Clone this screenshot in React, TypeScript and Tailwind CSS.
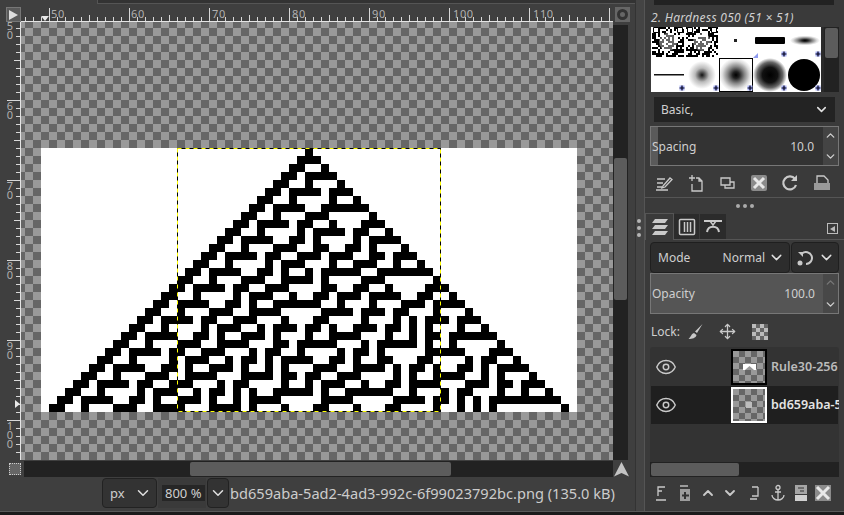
import React, { useMemo } from 'react';
import { ChevronDown, ChevronUp, Eye, Move } from 'lucide-react';

const CELL = 8;
const ROWS = 33;
const COLS = 67;

// rows of rule 30 as one path, merged per run of black cells
function rule30Path(ox: number, oy: number) {
  let row = new Array(COLS).fill(0);
  row[33] = 1;
  let d = '';
  for (let r = 0; r < ROWS; r++) {
    let c = 0;
    while (c < COLS) {
      if (row[c]) {
        const s = c;
        while (c < COLS && row[c]) c++;
        d += `M${ox + s * CELL} ${oy + r * CELL}h${(c - s) * CELL}v${CELL}h${-(c - s) * CELL}z`;
      } else c++;
    }
    row = row.map((v, i) => ((row[i - 1] || 0) ^ (v | (row[i + 1] || 0))));
  }
  return d;
}

function noisePath(seed: number, w: number, h: number, size: number) {
  let s = seed;
  let d = '';
  for (let y = 0; y < h; y += size) {
    for (let x = 0; x < w; x += size) {
      s = (s * 1103515245 + 12345) & 0x7fffffff;
      if ((s >> 16) % 100 < 52) d += `M${x} ${y}h${size}v${size}h${-size}z`;
    }
  }
  return d;
}

function TopRuler() {
  const ticks: number[] = [];
  for (let x = 4; x < 592; x += 8) ticks.push(x);
  const labels = [
    [30, '50'],
    [110, '60'],
    [191, '70'],
    [271, '80'],
    [351, '90'],
    [432, '100'],
    [512, '110'],
  ] as const;
  return (
    <svg width="592" height="15" className="block">
      {ticks.map((x, i) => {
        const major = i % 10 === 3;
        const mid = i % 10 === 8;
        return <rect key={x} x={x} y={major ? 1 : mid ? 8 : 10} width="1" height={major ? 14 : mid ? 7 : 5} fill="#d8d8d8" />;
      })}
      {labels.map(([x, t]) => (
        <text key={t} x={x} y="11" fontSize="11" fill="#b0b0b0" letterSpacing="0.6">{t}</text>
      ))}
      <rect x="0" y="14" width="592" height="1" fill="#e4e4e4" />
      <path d="M20 9h8l-4 5z" fill="#e8e8e8" />
    </svg>
  );
}

function LeftRuler() {
  const ticks: number[] = [];
  for (let y = 6; y < 438; y += 8) ticks.push(y);
  const labels: [number, string][] = [
    [-2, '50'],
    [78, '60'],
    [158, '70'],
    [238, '80'],
    [318, '90'],
    [398, '100'],
  ];
  return (
    <svg width="15" height="438" className="block shrink-0">
      {ticks.map((y, i) => {
        const major = i % 10 === 9;
        const mid = i % 10 === 4;
        return <rect key={y} x={major ? 1 : mid ? 8 : 10} y={y} width={major ? 14 : mid ? 7 : 5} height="1" fill="#d8d8d8" />;
      })}
      {labels.map(([y, t]) =>
        t.split('').map((ch, i) => (
          <text key={t + i} x="4" y={y + 10 + i * 9} fontSize="11" fill="#b0b0b0" textAnchor="middle">{ch}</text>
        )),
      )}
      <rect x="14" y="0" width="1" height="438" fill="#e4e4e4" />
      <path d="M9 378v8l5-4z" fill="#e8e8e8" />
    </svg>
  );
}

function Canvas() {
  const cells = useMemo(() => rule30Path(20, 126), []);
  return (
    <svg width="592" height="438" className="block shrink-0">
      <defs>
        <pattern id="chk" x="4" y="6" width="16" height="16" patternUnits="userSpaceOnUse">
          <rect width="16" height="16" fill="#666666" />
          <rect width="8" height="8" fill="#999999" />
          <rect x="8" y="8" width="8" height="8" fill="#999999" />
        </pattern>
      </defs>
      <rect width="592" height="438" fill="url(#chk)" />
      <rect x="20" y="126" width="536" height="264" fill="#ffffff" />
      <path d={cells} fill="#000000" />
      <rect x="156.500" y="126.500" width="263" height="263" fill="none" stroke="#000000" strokeWidth="1" />
      <rect x="156.500" y="126.500" width="263" height="263" fill="none" stroke="#ffff00" strokeWidth="1" strokeDasharray="4 4" />
    </svg>
  );
}

function ComboChevron({ size = 18 }: { size?: number }) {
  return <ChevronDown size={size} strokeWidth={2} className="text-[#e0e0e0]" />;
}

function BrushGrid() {
  const n1 = useMemo(() => noisePath(7, 32, 30, 2), []);
  const n2 = useMemo(() => noisePath(19, 32, 30, 2), []);
  const Plus = ({ x, y }: { x: number; y: number }) => (
    <g>
      <rect x={x - 2.500} y={y - 2.500} width="5" height="5" fill="#a9b2f5" />
      <path d={`M${x - 2.500} ${y}h5M${x} ${y - 2.500}v5`} stroke="#000020" strokeWidth="1.200" />
    </g>
  );
  const Corners = () => (
    <path d="M1.500 0.500h5v5h-5zM25.500 0.500h5v5h-5z" fill="#ffffff" stroke="#000000" strokeWidth="1" />
  );
  return (
    <svg width="170" height="65" className="block">
      <defs>
        <radialGradient id="g1"><stop offset="0" stopColor="#111" /><stop offset="0.15" stopColor="#444" /><stop offset="0.5" stopColor="#bbb" /><stop offset="1" stopColor="#fff" /></radialGradient>
        <radialGradient id="g2"><stop offset="0" stopColor="#000" /><stop offset="0.2" stopColor="#222" /><stop offset="0.5" stopColor="#888" /><stop offset="0.8" stopColor="#ddd" /><stop offset="1" stopColor="#fff" /></radialGradient>
        <radialGradient id="g3"><stop offset="0" stopColor="#000" /><stop offset="0.45" stopColor="#111" /><stop offset="0.75" stopColor="#666" /><stop offset="1" stopColor="#fff" /></radialGradient>
      </defs>
      <rect width="170" height="65" fill="#ffffff" />
      <g transform="translate(1 0)">
        <path d={n1} fill="#000" />
        <circle cx="16" cy="15" r="9" fill="#ffffff" opacity="0.4" />
        <Corners />
      </g>
      <g transform="translate(35 0)">
        <path d={n2} fill="#000" />
        <circle cx="16" cy="15" r="9" fill="#ffffff" opacity="0.4" />
        <Corners />
      </g>
      <rect x="83" y="12" width="3" height="3" fill="#222" />
      <path d="M102 31l5-5v5z" fill="#8f9bf0" />
      <rect x="104" y="10" width="30" height="7" rx="1" fill="#000" />
      <ellipse cx="154" cy="13.500" rx="15" ry="5" fill="url(#g2)" />
      <rect x="3" y="47" width="30" height="1.500" fill="#111" />
      <circle cx="51" cy="48" r="14" fill="url(#g1)" />
      <circle cx="85" cy="48" r="17" fill="url(#g2)" />
      <circle cx="119" cy="48" r="17" fill="url(#g3)" />
      <circle cx="153" cy="48" r="16" fill="#000" />
      <rect x="68.500" y="31.500" width="33" height="33" fill="none" stroke="#000" strokeWidth="1" />
      {[[133, 27], [167, 27]].map(([x, y]) => <Plus key={x} x={x} y={y} />)}
      {[31, 65, 99, 133, 167].map((x) => <Plus key={x} x={x} y={61} />)}
    </svg>
  );
}

function Ico({ children }: { children: React.ReactNode }) {
  return (
    <svg width="18" height="18" viewBox="0 0 18 18" fill="none" stroke="#c9c9c9" strokeWidth="1.300" className="block shrink-0">
      {children}
    </svg>
  );
}

function Spin({ bg }: { bg: string }) {
  return (
    <div className={`flex flex-col w-[15px] h-full items-center justify-between py-[2px] ${bg}`}>
      <ChevronUp size={13} strokeWidth={2.500} className="text-[#d0d0d0]" />
      <ChevronDown size={13} strokeWidth={2.500} className="text-[#d0d0d0]" />
    </div>
  );
}

function LayerThumb({ selected, children }: { selected: boolean; children: React.ReactNode }) {
  return (
    <svg width="36" height="36" className="block shrink-0">
      <defs>
        <pattern id="tchk" x="2" y="2" width="12" height="12" patternUnits="userSpaceOnUse">
          <rect width="12" height="12" fill="#666666" />
          <rect width="6" height="6" fill="#999999" />
          <rect x="6" y="6" width="6" height="6" fill="#999999" />
        </pattern>
      </defs>
      <rect x="1" y="1" width="34" height="34" fill="url(#tchk)" stroke={selected ? '#ffffff' : '#000000'} strokeWidth="2" />
      {children}
    </svg>
  );
}

export default function App() {
  return (
    <div className="flex flex-col w-[844px] h-[515px] overflow-hidden bg-[#1b1b1b] text-[#cfcfcf] font-['Noto_Sans',sans-serif]">
      <div className="flex h-[512px] bg-[#3f3f3f] border-b border-[#5a5a5a]">
        {/* image window */}
        <div className="flex flex-col w-[636px] shrink-0 pl-[6px] border-r border-[#333333]">
          <div className="h-[7px] flex">
            <div className="w-[91px]" />
            <div className="flex-1 h-[4px] bg-[#333333] border-b border-l border-[#555555]" />
          </div>
          <div className="flex h-[15px]">
            <div className="w-[15px] h-[15px] flex items-center justify-center bg-[#5a5a5a] border border-[#777777]">
              <div className="w-0 h-0 border-y-[5px] border-y-transparent border-l-[9px] border-l-[#dddddd]" />
            </div>
            <TopRuler />
            <div className="w-[15px] h-[15px] ml-[2px] flex items-center justify-center bg-[#666666]">
              <div className="w-[11px] h-[11px] rounded-full border-[3px] border-[#333333]" />
            </div>
          </div>
          <div className="flex h-[438px]">
            <LeftRuler />
            <Canvas />
            <div className="w-[15px] mt-[3px] bg-[#222222] p-px pt-[133px]">
              <div className="h-[142px] rounded-[2px] bg-[#5c5c5c]" />
            </div>
          </div>
          <div className="flex h-[16px] mt-px">
            <div className="w-[18px] flex items-center justify-center">
              <div className="w-[12px] h-[12px] bg-[#666666] border border-dotted border-[#cccccc]" />
            </div>
            <div className="w-[589px] bg-[#222222] py-px pl-[166px] pr-[162px]">
              <div className="h-full rounded-[2px] bg-[#5c5c5c]" />
            </div>
            <svg width="17" height="17" className="block shrink-0">
              <path d="M8.500 1L16 15.500L8.500 12L1 15.500z" fill="#c4c4c4" />
            </svg>
          </div>
          <div className="flex items-center h-[32px] pl-[96px] gap-px">
            <div className="flex items-center justify-between w-[55px] h-[30px] pl-[7px] pr-[4px] bg-[#333333] rounded-[4px] border border-[#222222] text-[13px]">
              <span className="mt-[2px]">px</span>
              <ComboChevron />
            </div>
            <div className="flex items-center w-[48px] h-[30px] bg-[#3a3a3a] pl-[4px] text-[13px]">
              <span className="bg-[#262626] px-[3px] whitespace-nowrap leading-[16px]">800 %</span>
            </div>
            <div className="flex items-center justify-center w-[22px] h-[30px] bg-[#333333] rounded-[4px] border border-[#222222]">
              <ComboChevron />
            </div>
            <span className="mt-px text-[14.600px] text-[#cccccc] whitespace-nowrap">bd659aba-5ad2-4ad3-992c-6f99023792bc.png (135.0 kB)</span>
          </div>
        </div>

        {/* gap with dock handle */}
        <div className="relative w-[8px] shrink-0 bg-[#444444]">
          <div className="absolute left-px top-[219px] flex flex-col gap-[3px]">
            <div className="w-[4px] h-[4px] rounded-full bg-[#b5b5b5]" />
            <div className="w-[4px] h-[4px] rounded-full bg-[#b5b5b5]" />
            <div className="w-[4px] h-[4px] rounded-full bg-[#b5b5b5]" />
          </div>
        </div>

        {/* right dock */}
        <div className="flex flex-col w-[200px] shrink-0 border-l border-[#555555] bg-[#3a3a3a]">
          <div className="h-[5px] ml-[9px] mr-[10px] bg-[#222222]" />
          <div className="h-[22px] pl-[6px] pt-[4px] flex items-center text-[12px] italic tracking-[0.3px] text-[#cfcfcf] whitespace-nowrap">
            2. Hardness 050 (51 × 51)
          </div>
          <div className="flex h-[65px] ml-[6px] mr-[5px] bg-[#2a2a2a]">
            <BrushGrid />
            <div className="w-[15px] ml-[3px] bg-[#222222] p-px">
              <div className="h-[30px] rounded-[2px] bg-[#5c5c5c]" />
            </div>
          </div>
          <div className="flex items-center justify-between h-[25px] mt-[5px] ml-[9px] mr-[9px] bg-[#232323] pl-[7px] pr-[6px] text-[12px]">
            <span>Basic,</span>
            <ChevronDown size={15} strokeWidth={2.500} className="text-[#e0e0e0]" />
          </div>
          <div className="flex items-center h-[40px] mt-[4px] ml-[5px] mr-[5px] border border-[#777777] bg-[#333333]">
            <div className="relative flex items-center flex-1 h-full pt-px">
              <div className="absolute left-0 inset-y-0 w-[7px] bg-[#5a5a5a]" />
              <span className="relative pl-[1px] text-[12px]">Spacing</span>
              <span className="relative ml-auto pr-[9px] text-[12px]">10.0</span>
            </div>
            <Spin bg="bg-[#444444]" />
          </div>
          <div className="flex items-center justify-between h-[31px] pt-[3px] pl-[10px] pr-[13px]">
            <Ico><path d="M2 5h8M2 9h6M2 13h5M1 16h12M8 12l7-8 2 1.500-7 7.500-3 1z" /></Ico>
            <Ico><path d="M5 1v6M2 4h6M9 4h3l3 3v10H5v-7M12 4v3h3" /></Ico>
            <Ico><path d="M3 4h9v7H3zM12 8h4v6H7v-3" /></Ico>
            <svg width="18" height="18" className="block shrink-0">
              <rect x="1" y="1" width="16" height="16" rx="2" fill="#8b8b8b" />
              <path d="M4 4l10 10M14 4L4 14" stroke="#e8e8e8" strokeWidth="3" />
            </svg>
            <Ico><path d="M14 5A6.500 6.500 0 1 0 15 11" strokeWidth="2.200" /><path d="M10 7h6V1z" fill="#c9c9c9" stroke="none" /></Ico>
            <svg width="18" height="18" viewBox="0 0 18 18" fill="none" className="block shrink-0">
              <path d="M4 9V2h7l4 4v3" stroke="#c9c9c9" strokeWidth="1.300" />
              <path d="M1 16V9h16v7z" fill="#9a9a9a" />
            </svg>
          </div>
          <div className="h-[16px] border-t border-[#555555] flex items-center justify-center gap-[3px]">
            <div className="w-[4px] h-[4px] rounded-full bg-[#aaaaaa]" />
            <div className="w-[4px] h-[4px] rounded-full bg-[#aaaaaa]" />
            <div className="w-[4px] h-[4px] rounded-full bg-[#aaaaaa]" />
          </div>
          {/* tabs */}
          <div className="flex items-end h-[27px] border-b border-[#555555]">
            <div className="flex items-center justify-center w-[29px] h-[27px] border-t border-r border-l border-[#555555] mb-[-1px] bg-[#3a3a3a]">
              <svg width="18" height="18" className="block">
                <path d="M4 1h13l-3 4H1zM4 7h13l-3 4H1zM4 13h13l-3 4H1z" fill="#c9c9c9" />
              </svg>
            </div>
            <div className="flex items-center justify-center w-[25px] h-[25px] bg-[#2b2b2b]">
              <svg width="18" height="18" fill="none" stroke="#c9c9c9" strokeWidth="1.500" className="block">
                <rect x="1.500" y="1.500" width="15" height="15" rx="1" />
                <path d="M6.500 4v10M9.500 4v10M12.500 4v10" />
              </svg>
            </div>
            <div className="flex items-center justify-center w-[26px] h-[25px] ml-px bg-[#2b2b2b]">
              <svg width="20" height="18" fill="none" stroke="#c9c9c9" strokeWidth="2" className="block">
                <path d="M1 3h18M4 14c1-7 11-7 12 0" />
                <path d="M7 3l3 4 3-4" strokeWidth="1.500" />
              </svg>
            </div>
            <div className="ml-auto mr-[6px] mb-[5px] flex items-center justify-center w-[11px] h-[11px] border border-[#bbbbbb]">
              <div className="w-0 h-0 border-y-[3px] border-y-transparent border-r-[5px] border-r-[#bbbbbb]" />
            </div>
          </div>
          {/* mode */}
          <div className="flex h-[31px] mt-[2px] ml-[5px] mr-[5px] gap-px">
            <div className="flex items-center justify-between w-[140px] bg-[#2d2d2d] rounded-[4px] border border-[#1f1f1f] pl-[7px] pr-[4px] text-[12px]">
              <span>Mode</span>
              <span className="ml-auto mr-[3px]">Normal</span>
              <ChevronDown size={17} strokeWidth={2} className="text-[#e0e0e0]" />
            </div>
            <div className="flex items-center justify-between flex-1 bg-[#2d2d2d] rounded-[4px] border border-[#1f1f1f] pl-[4px] pr-[3px]">
              <svg width="18" height="18" fill="none" stroke="#c9c9c9" strokeWidth="2" className="block shrink-0">
                <path d="M6 4.500A6 6 0 1 1 10 15" />
                <path d="M2 3h5v5z" fill="#c9c9c9" stroke="none" />
                <circle cx="4" cy="14" r="2.500" fill="#c9c9c9" stroke="none" />
              </svg>
              <ChevronDown size={17} strokeWidth={2} className="text-[#e0e0e0]" />
            </div>
          </div>
          {/* opacity */}
          <div className="flex items-center h-[41px] mx-[5px] border border-[#777777] bg-[#555555]">
            <div className="flex items-center flex-1 h-full text-[12px]">
              <span className="pl-[1px]">Opacity</span>
              <span className="ml-auto pr-[8px]">100.0</span>
            </div>
            <div className="flex flex-col w-[15px] h-full items-center justify-between py-[2px] bg-[#484848]">
              <ChevronUp size={13} strokeWidth={2.500} className="text-[#777777]" />
              <ChevronDown size={13} strokeWidth={2.500} className="text-[#d0d0d0]" />
            </div>
          </div>
          {/* lock */}
          <div className="flex items-center h-[33px] pt-[2px] ml-[6px] text-[12px]">
            <span className="w-[36px]">Lock:</span>
            <svg width="17" height="17" className="block shrink-0">
              <path d="M15.500 1L10 10l-2-1.500zM7 10l2.500 2C9 15 5 16 1.500 16 4 14 4 11 7 10z" fill="#c9c9c9" />
            </svg>
            <Move size={17} strokeWidth={1.800} className="ml-[15px] text-[#c9c9c9]" />
            <svg width="16" height="16" className="ml-[16px] block shrink-0">
              <rect width="16" height="16" fill="#666" />
              <path d="M0 0h4v4H0zM8 0h4v4H8zM4 4h4v4H4zM12 4h4v4h-4zM0 8h4v4H0zM8 8h4v4H8zM4 12h4v4H4zM12 12h4v4h-4z" fill="#bbb" />
            </svg>
          </div>
          {/* layer list */}
          <div className="flex flex-col h-[115px] ml-[5px] mr-[5px] pt-px bg-[#333333] rounded-t-[3px] overflow-hidden">
            <div className="flex items-center h-[38px] pl-[5px]">
              <Eye size={22} strokeWidth={1.600} className="shrink-0 text-[#c9c9c9]" />
              <div className="ml-[54px] shrink-0">
                <LayerThumb selected={false}>
                  <rect x="12" y="15" width="13" height="6" fill="#ffffff" />
                  <path d="M14 21l4.500-4 4.500 4z" fill="#999999" />
                </LayerThumb>
              </div>
              <span className="ml-[4px] text-[12.500px] font-semibold text-[#bbbbbb] whitespace-nowrap">Rule30-256</span>
            </div>
            <div className="flex items-center h-[38px] pl-[4px] bg-[#1f1f1f] mx-px">
              <Eye size={22} strokeWidth={1.600} className="shrink-0 text-[#c9c9c9]" />
              <div className="ml-[54px] shrink-0">
                <LayerThumb selected={true}>
                  <rect x="15" y="15" width="6" height="6" fill="#bdbdbd" />
                </LayerThumb>
              </div>
              <span className="ml-[4px] text-[12.500px] font-semibold text-[#e4e4e4] whitespace-nowrap">bd659aba-5</span>
            </div>
          </div>
          <div className="h-[15px] ml-[5px] mr-[5px] bg-[#222222] p-px">
            <div className="w-[88px] h-full rounded-[2px] bg-[#5c5c5c]" />
          </div>
          {/* layer actions */}
          <div className="flex items-center justify-between h-[32px] pl-[8px] pr-[12px]">
            <Ico><path d="M5 12V3h7M5 3v4h4M3 16h10" /></Ico>
            <svg width="16" height="18" className="block shrink-0">
              <path d="M3 1h8v2H3zM3 5h10v12H3z" fill="#9c9c9c" />
              <path d="M8 8v7M5 11.500h7" stroke="#333" strokeWidth="2" />
            </svg>
            <ChevronUp size={16} strokeWidth={2.800} className="text-[#c9c9c9]" />
            <ChevronDown size={16} strokeWidth={2.800} className="text-[#c9c9c9]" />
            <Ico><path d="M13 3H7M13 3v9H7M5 15h7" /></Ico>
            <Ico><circle cx="9" cy="3.500" r="2" /><path d="M9 5.500V16M6 8h6M3 11c0 3 3 5 6 5s6-2 6-5" /></Ico>
            <svg width="14" height="18" className="block shrink-0">
              <path d="M1 1h12v9H1z" fill="#a5a5a5" />
              <path d="M1 11h12v6H1z" fill="#d0d0d0" />
              <path d="M4 4h6M6 7h4" stroke="#333" strokeWidth="1" />
            </svg>
            <svg width="18" height="18" className="block shrink-0">
              <rect x="1" y="1" width="16" height="16" fill="#8b8b8b" />
              <path d="M3 3l12 12M15 3L3 15" stroke="#e8e8e8" strokeWidth="3" />
            </svg>
          </div>
        </div>
      </div>
    </div>
  );
}
